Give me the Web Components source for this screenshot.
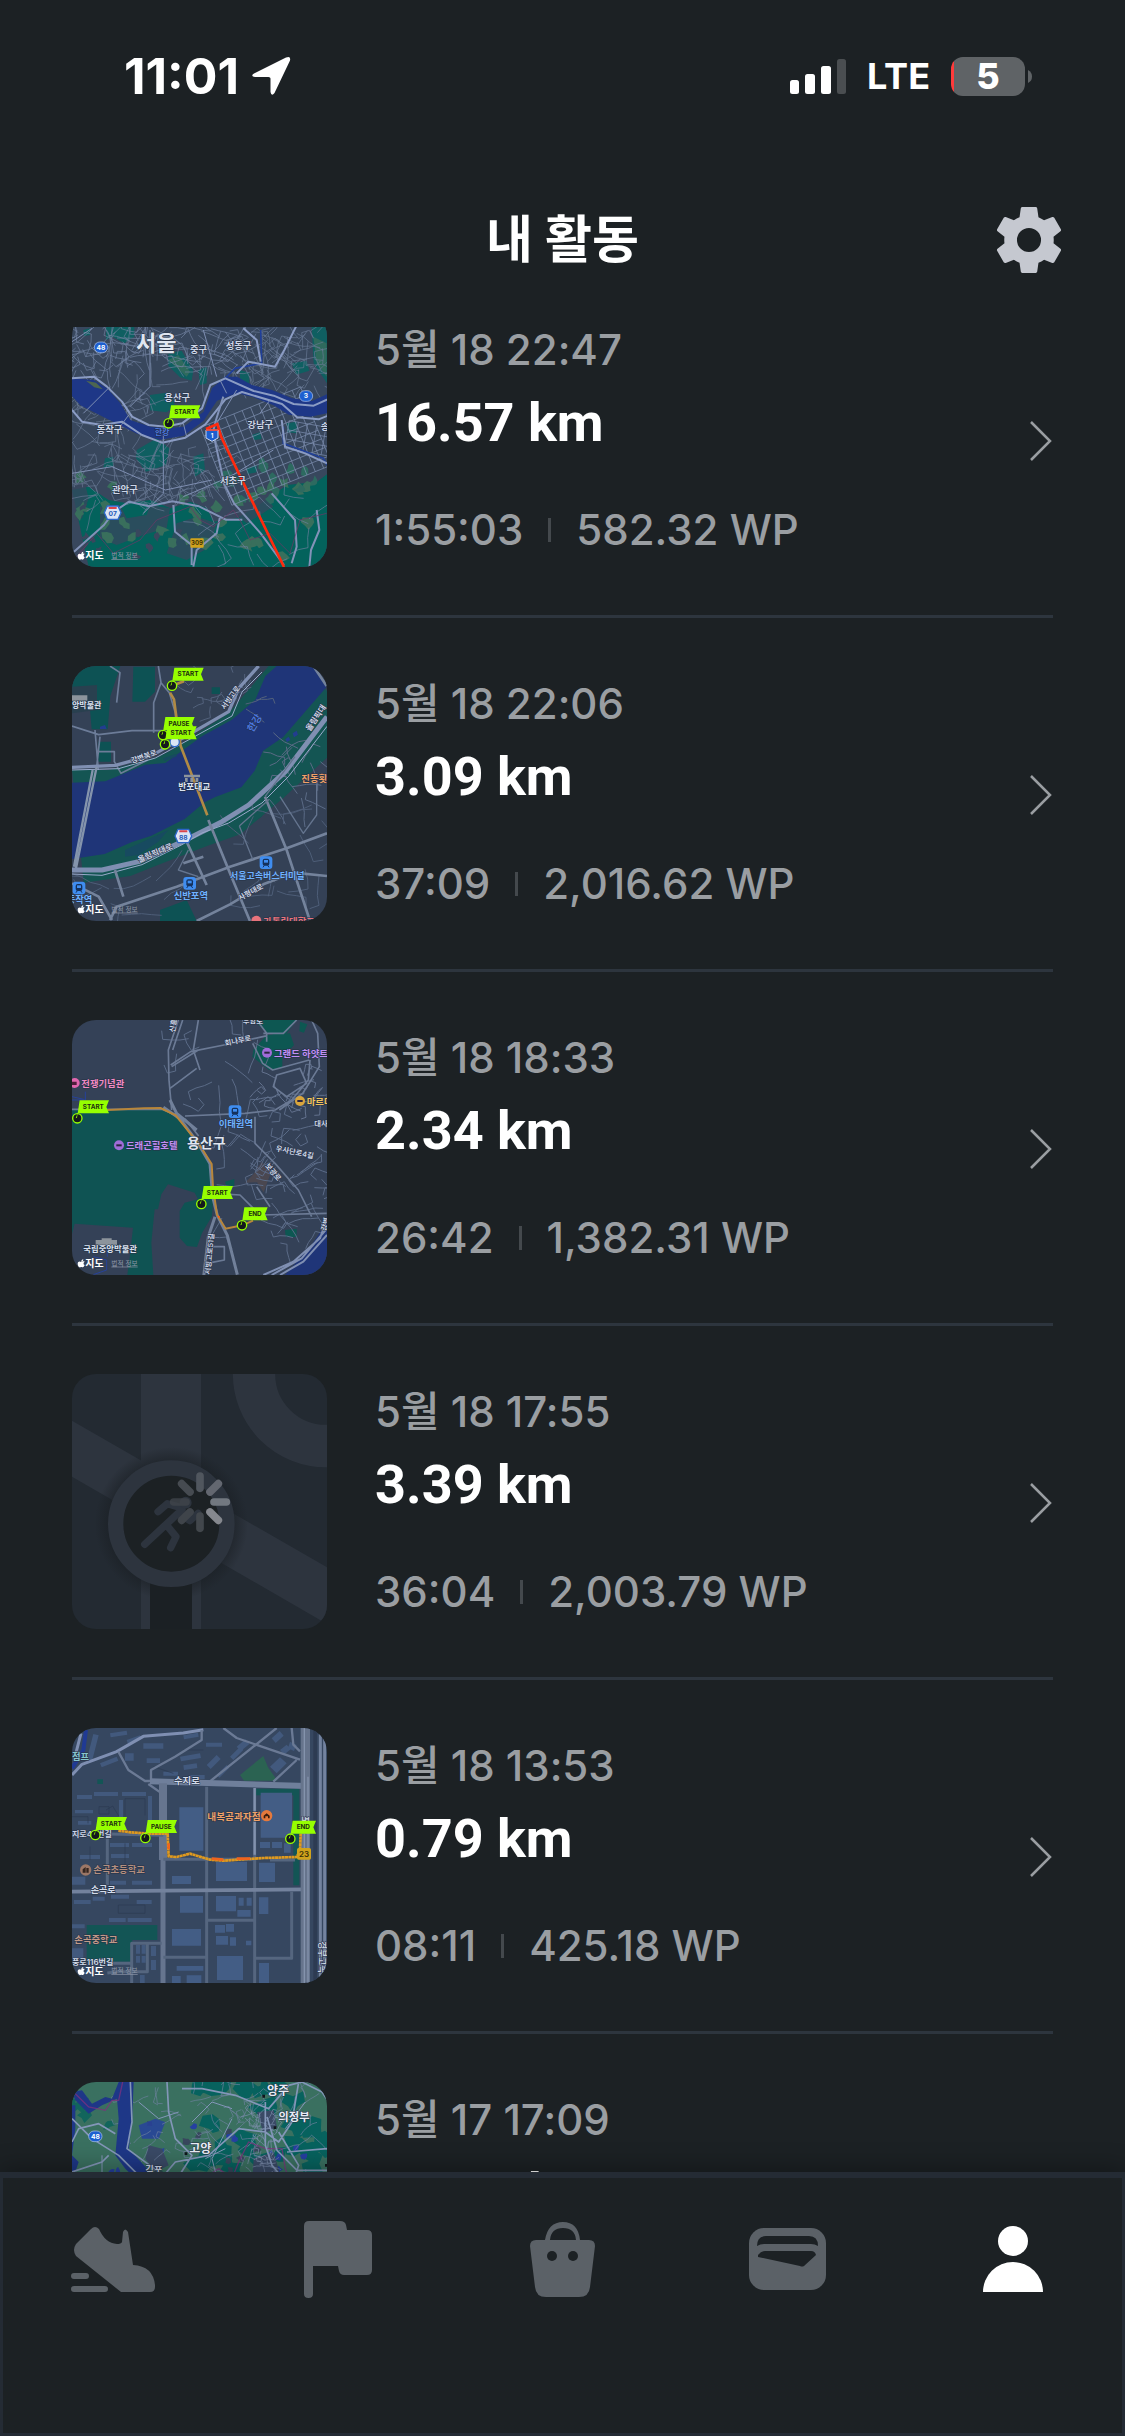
<!DOCTYPE html>
<html lang="ko">
<head>
<meta charset="utf-8">
<meta name="viewport" content="width=device-width, initial-scale=1">
<title>내 활동</title>
<style>
  :root {
    --bg: #1c2124;
    --line: #2d353e;
    --edge: #242b34;
    --muted: #9a9ea2;
    --icon: #5b6167;
  }
  html, body { height: 100%; margin: 0; }
  body {
    background: var(--bg);
    color: #fff;
    font-family: Inter, "Noto Sans CJK KR", sans-serif;
  }
</style>
</head>
<body>
<app-screen>
  <status-bar slot="top" time="11:01" network="LTE" battery="5"></status-bar>
  <title-bar slot="top">내 활동</title-bar>

  <activity-row map="gangnam">
    <span slot="date">5월 18 22:47</span>
    <span slot="distance">16.57 km</span>
    <span slot="duration">1:55:03</span>
    <span slot="points">582.32 WP</span>
  </activity-row>
  <activity-row map="banpo">
    <span slot="date">5월 18 22:06</span>
    <span slot="distance">3.09 km</span>
    <span slot="duration">37:09</span>
    <span slot="points">2,016.62 WP</span>
  </activity-row>
  <activity-row map="itaewon">
    <span slot="date">5월 18 18:33</span>
    <span slot="distance">2.34 km</span>
    <span slot="duration">26:42</span>
    <span slot="points">1,382.31 WP</span>
  </activity-row>
  <activity-row map="loading">
    <span slot="date">5월 18 17:55</span>
    <span slot="distance">3.39 km</span>
    <span slot="duration">36:04</span>
    <span slot="points">2,003.79 WP</span>
  </activity-row>
  <activity-row map="suji">
    <span slot="date">5월 18 13:53</span>
    <span slot="distance">0.79 km</span>
    <span slot="duration">08:11</span>
    <span slot="points">425.18 WP</span>
  </activity-row>
  <activity-row map="goyang">
    <span slot="date">5월 17 17:09</span>
    <span slot="distance">12.05 km</span>
  </activity-row>

  <tab-bar slot="bottom"></tab-bar>
</app-screen>

<script>
// ---- map drawing helpers (units are a third of a pixel) ----

const label = (x, y, size, text, fill = "#ccd5e6", extra = "") =>
  `<text x="${x}" y="${y}" font-size="${size}" font-weight="600" fill="${fill}" stroke="#263145" stroke-width="3" paint-order="stroke" ${extra}>${text}</text>`;

const flag = (x, y, text) => {
  const w = text === "END" ? 70 : 88;
  return `
    <circle cx="${x}" cy="${y}" r="14" fill="#15191c" stroke="#96ff00" stroke-width="4"/>
    <path d="M${x - 1} ${y - 2}L${x + 7} ${y - 54}h${w}l-8 20l8 19h-${w + 6}l-6 15z" fill="#96ff00"/>
    <text x="${x + 4 + w / 2}" y="${y - 28}" font-size="19" font-weight="700" fill="#1c2d10" text-anchor="middle">${text}</text>`;
};

const credit = (x, y) => `
  <path d="M${x + 10} ${y - 14}c-3-3-10-2-10 5c0 7 4 11 7 11c2 0 2-1 4-1s2 1 4 1c3 0 5-4 6-7c-5-2-4-8 0-10c-3-3-7-1-9 0zM${x + 11} ${y - 15}c0-4 2-7 6-7c0 4-3 7-6 7z" fill="#fff"/>
  <text x="${x + 23}" y="${y + 1}" font-size="30" font-weight="700" fill="#fff">지도</text>
  <text x="${x + 101}" y="${y - 3}" font-size="20" fill="#8d97a8" text-decoration="underline">법적 정보</text>`;

const shield = (x, y, text) => `
  <rect x="${x - 20}" y="${y - 16}" width="40" height="32" rx="16" fill="#1d5fd0" stroke="#b5c8ee" stroke-width="2"/>
  <text x="${x}" y="${y + 7}" font-size="20" font-weight="700" fill="#fff" text-anchor="middle">${text}</text>`;

const hexShield = (x, y, text) => `
  <path d="M${x - 25} ${y}l9-20h32l9 20l-9 20h-32z" fill="#dbe4f5" stroke="#2b66c9" stroke-width="4"/>
  <path d="M${x - 12} ${y - 14}h24" stroke="#d8454c" stroke-width="6"/>
  <text x="${x}" y="${y + 11}" font-size="20" font-weight="700" fill="#2459b8" text-anchor="middle">${text}</text>`;

const poi = (x, y, color) => `
  <circle cx="${x}" cy="${y}" r="15" fill="${color}"/>
  <rect x="${x - 8}" y="${y - 3}" width="16" height="6" fill="#2a2540"/>`;

const station = (x, y) => `
  <rect x="${x - 19}" y="${y - 19}" width="38" height="38" rx="9" fill="#3f8df0"/>
  <rect x="${x - 10}" y="${y - 12}" width="20" height="21" rx="6" fill="#14315c"/>
  <rect x="${x - 6}" y="${y - 8}" width="12" height="8" fill="#3f8df0"/>
  <path d="M${x - 9} ${y + 14}l4-6M${x + 9} ${y + 14}l-4-6" stroke="#14315c" stroke-width="3"/>`;

const roads = (d, width, color = "#7f8fb2") =>
  `<path d="${d}" fill="none" stroke="${color}" stroke-width="${width}" stroke-linejoin="round"/>`;

// small streets: short wandering lines, the same for the same seed
function streets(seed, count, [x, y, w, h], len = 24) {
  let s = seed;
  const rnd = () => (s = (s * 16807) % 2147483647) / 2147483647;
  let d = "";
  for (let i = 0; i < count; i++) {
    d += `M${(x + rnd() * w).toFixed(0)} ${(y + rnd() * h).toFixed(0)}`;
    let a = rnd() * 6.28;
    for (let j = 0; j < 4; j++) {
      a += rnd() < 0.3 ? 1.4 : rnd() * 0.6 - 0.3;
      d += `l${(Math.cos(a) * len).toFixed(0)} ${(Math.sin(a) * len).toFixed(0)}`;
    }
  }
  return d;
}

function blobs(seed, count, [x, y, w, h], r, fill) {
  let s = seed;
  const rnd = () => (s = (s * 16807) % 2147483647) / 2147483647;
  let out = "";
  for (let i = 0; i < count; i++) {
    const cx = x + rnd() * w, cy = y + rnd() * h;
    let pts = "";
    for (let a = 0; a < 8; a++) {
      const q = r * (0.4 + rnd());
      pts += `${(cx + Math.cos(a * 0.785) * q).toFixed(0)},${(cy + Math.sin(a * 0.785) * q).toFixed(0)} `;
    }
    out += `<polygon points="${pts}" fill="${fill}"/>`;
  }
  return out;
}

function grid(x, y, cols, rows, dx, dy) {
  let d = "";
  for (let i = 0; i <= cols; i++) d += `M${x + i * dx} ${y}v${rows * dy}`;
  for (let j = 0; j <= rows; j++) d += `M${x} ${y + j * dy}h${cols * dx}`;
  return d;
}

const rect = (x, y, w, h) => `M${x} ${y}h${w}v${h}h${-w}z`;

// ---- the maps ----

const maps = {
  gangnam: {
    box: "66 6 765 765",
    art: `
      <path d="M66 6h765v765h-765z" fill="#38475d"/>
      <path d="M168 40h85v40l-30 20l-35-20l-20 10zM355 130l40-8l35 60l-5 30l-35-10l-35-35zM100 60l20-5v20l-18 3zM300 255l60-8l15 40l-25 20l-50-6zM725 160l45-8l8 30l-40 12zM570 180l28 8v35l-28-5zM260 420l60-35l38 30l-10 50l-60 20l-30-40zM165 445l25-5v30l-30 5zM430 440l30-10l5 50l-30 20zM785 50h46v170l-40-60zM445 180l25-10v50l-20 5zM710 340l30-5v35l-28-3zM605 375l25-8l5 20l-22 3zM590 475l30-10v22l-28 5z" fill="#0f5f61"/>
      <path d="M355 150l30-15l35 50l-10 15zM790 80l40 20v100l-30-40z" fill="#2f6a5d"/>
      <path d="M66 540l50-10l60 40l55 10l70-10l60 25l60-20l50 20l20 40l70-10l80-50l70-50l90-10l60-45h31v351h-765z" fill="#03625c"/>
      <path d="M66 530l40-5l10 40l-20 60l-30 10zM150 590l60-5l20 40l60-10l10-30l60 10l-10 60l-70 20l-80 30l-50-20zM520 540l60-20l60 30l30 40l-80 50l-50-40zM380 640l60-20l60 20l-20 70l-70 40l-60-20z" fill="#38475d" opacity=".75"/>
      ${blobs(11, 34, [90, 500, 720, 250], 17, "#396f5c")}
      ${blobs(5, 14, [500, 420, 320, 160], 15, "#2d6a60")}
      ${blobs(77, 10, [100, 570, 300, 170], 11, "#38475d")}
      <g>
        ${roads(streets(7, 130, [60, 40, 560, 150]), 2, "#7182a0")}
        ${roads(streets(23, 95, [60, 380, 440, 190]), 2, "#6a7a96")}
        ${roads(streets(31, 60, [600, 60, 230, 190]), 2, "#6a7a96")}
        ${roads(streets(61, 40, [60, 220, 280, 130]), 2, "#6a7a96")}
        ${roads(streets(41, 16, [400, 560, 420, 190], 30), 2, "#7081a0")}
        <g transform="rotate(-22 600 400)">${roads(grid(480, 300, 12, 9, 27, 28), 2, "#7c8dae")}</g>
        <g transform="rotate(10 760 380)">${roads(grid(710, 340, 5, 3, 28, 28), 2, "#7c8dae")}</g>
      </g>
      <path d="M66 205l65 5l40 25l40 45l30 50l60 20l50 5l50-5l60-45l25-70l40-35h35l45 25l60 15l60 25l60 8l45-20l40-55v85l-30 25l-60 12l-65-6l-45-28l-60-24l-50-12l-60 22l-40 60l-60 45l-70 12l-70-18l-60-30l-60-30l-50-25l-45-50l-50-12z" fill="#1e3787"/>
      <path d="M108 212l30 6l20 20l-25-6z" fill="#4d6650"/>
      <path d="M632 60l3 100l-80 15l-30 30M700 350v50l120 45l11 20" fill="none" stroke="#1f3f9a" stroke-width="5"/>
      ${roads("M66 205l65-5l40 30l45 45l30 45l50 25l50 5l50-10l60-45l25-70l45-20l85 38l60 14l60 25l60 5l55-25l30-40M66 300l30 35l60 10l60-10l60 40l60 23l70-15l60-40l60-75l50-22l120 36l45 40l65 6l75-30M560 190l35-35l80 15l28-50l35-70M580 55l40 35l12 65M695 330l10 80l60 20l66 30", 6, "#8b9cc4")}
      ${roads("M72 725l90-80l30-40l45-30l60 14l70-15l80 15l80 40h50M492 380l30 140l30 60l80 90l70 95M520 260l-22 70l-10 40M665 550l70 80l5 80l-15 50M800 600l8 60l-25 60l-5 51M370 585l5 80l50 40v60M430 770l10-50l60-50l10-50", 6, "#8292b8")}
      ${roads("M300 60v170l-60 60M460 60l40 140M340 350v200l-60 60M66 95l60-40M66 490l120-20l160 70l140-30M400 560l140-60l130-80M560 240l-60 100M660 270l-30 40M180 230l-80 80M510 210l20 40M240 310l-30 40M400 340l10 40", 3)}
      <path d="M80 740l60-70l50 60l80-40l50-60l100-40l30 40l40 20l60-50l20 30l30 60l60-20l60 60l30-100l80-20" fill="none" stroke="#6f3767" stroke-width="3" opacity=".7"/>
      <path d="M468 357l34-15l12 40l188 389" fill="none" stroke="#ff2a0d" stroke-width="8"/>
      <path d="M468 360h36v24l-18 10l-18-10z" fill="#1d5fd0" stroke="#c8d6f3" stroke-width="3"/>
      <path d="M468 360h36" stroke="#ff3a20" stroke-width="5"/>
      <text x="486" y="385" font-size="18" font-weight="700" fill="#fff" text-anchor="middle">1</text>
      ${shield(153, 112, "48")}${shield(768, 258, "3")}
      ${hexShield(188, 608, "07")}
      <rect x="421" y="685" width="40" height="28" rx="3" fill="#d0a21c"/>
      <text x="441" y="706" font-size="18" font-weight="700" fill="#3b3008" text-anchor="middle">309</text>
      ${label(258, 122, 66, "서울", "#dfe5f0")}
      ${label(420, 130, 28, "중구")}${label(527, 118, 28, "성동구")}
      ${label(343, 272, 28, "용산구")}${label(140, 368, 28, "동작구")}
      ${label(592, 354, 28, "강남구")}${label(510, 522, 28, "서초구")}
      ${label(186, 550, 28, "관악구")}${label(812, 360, 28, "송")}
      ${label(314, 375, 24, "한강", "#4a76e0")}
      ${flag(356, 340, "START")}
      ${credit(83, 747)}`
  },

  banpo: {
    box: "66 48 765 765",
    art: `
      <path d="M66 48h765v765h-765z" fill="#344156"/>
      <path d="M66 48h145l-30 90l-8 100h-48l-5-60l-54-50zM250 50h65v75l-30 30h-38zM145 275h38v60h-38zM485 112h25v20h-25zM330 780l80-30l30 63h-110zM600 490l30-15l5 25l-25 15z" fill="#0d5254"/>
      <path d="M66 110l75-5v75l-75 10z" fill="#29404f"/>
      <path d="M66 360h110l150-40l40-20l60-40l110-70l120-142h110l65 75v200l-130 120l-130 110l-100 35l-130 50l-100 40l-140 20z" fill="#145553"/>
      <path d="M66 398l100-4l120-50l60-5l110-80l90-50l70-60l30-70l35-32h110l38 65l-130 150l-60 40l-25 60l-40 50l-80 30l-30 15l-60 50l-100 50l-60 20l-80 35l-98 15z" fill="#1f3578"/>
      <path d="M225 600l130-60l-30 35l-60 40l-40 5zM340 325l40-14v8l-36 14z" fill="#174a60"/>
      <path d="M706 268l10-8l5 10l-10 6zM728 250l12-8l4 12l-12 8zM150 230l15-5l5 12h-20z" fill="#223d90"/>
      ${roads(streets(19, 16, [430, 48, 190, 130], 17), 3, "#53627c")}
      ${roads(streets(9, 16, [640, 260, 190, 250], 22), 3, "#5b6b86")}
      ${roads(streets(29, 14, [580, 480, 250, 300], 30), 3, "#4e5e78")}
      ${roads(streets(39, 8, [100, 660, 300, 140], 30), 3, "#4e5e78")}
      ${roads("M325 48l8 50l-22 60v90M333 98l25 30l18 60l4 60M66 228l80 26l100-12h90M135 240l10 120M150 260l-10 90M145 305h48v30l20 35l80-40M180 48l30 20l-10 90", 5, "#6c7c98")}
      ${roads("M66 352l130-6l110-30l100-56l130-75l30-70l60-67", 10)}
      ${roads("M66 360l140-4l110-32l110-60l120-66l30-72l60-60", 3, "#9aaacb")}
      ${roads("M140 350l-62 305M128 360l-56 290", 7, "#8494ac")}
      ${roads("M66 660h90l110-25l130-60l120-60l80-50l110-100l125-165", 15)}
      ${roads("M66 672l90 4l120-32l120-60l60-35l80-30l100-60l80-80l115-150", 3, "#9aaacb")}
      ${roads("M180 810l20-40l180-60l160-60l170-55l121-45M440 813l100-50l100-60l90-35l101 10M475 510l65 160l60 143M645 440l65 160l70 213M410 575l60 130M195 660l25 80M400 640l60-20M66 700l80 40l40 70M790 48l40 60", 8, "#74839c")}
      ${roads("M568 528l40 100M568 528l90-80M645 440l90-120M800 400v95l-40 55l-70-110M415 600l-30 60l60 20", 4, "#64748e")}
      <path d="M370 106l32-12M360 128l12 20l8 60l12 80l80 208" fill="none" stroke="#b08a45" stroke-width="8"/>
      <path d="M66 136h46v16h-46zM402 374h48v8h-48zM405 384h8v12h-8zM421 384h8v12h-8zM437 384h8v12h-8z" fill="#8c949c"/>
      ${label(66, 173, 24, "앙박물관", "#dce4f2")}
      ${label(385, 420, 26, "반포대교", "#dce4f2")}
      ${label(0, 0, 22, "강변북로", "#ccd5e6", 'transform="translate(246 340) rotate(-19)"')}
      ${label(0, 0, 22, "서빙고로", "#ccd5e6", 'transform="translate(524 180) rotate(-54)"')}
      ${label(0, 0, 30, "한강", "#4a76e0", 'transform="translate(608 248) rotate(-58)"')}
      ${label(0, 0, 24, "올림픽대로", "#ccd5e6", 'transform="translate(268 638) rotate(-23)"')}
      ${label(0, 0, 24, "올림픽대", "#ccd5e6", 'transform="translate(780 245) rotate(-56)"')}
      ${label(0, 0, 22, "사평대로", "#ccd5e6", 'transform="translate(570 752) rotate(-28)"')}
      ${label(754, 397, 28, "진동횟", "#f0a268")}
      ${label(540, 686, 27, "서울고속버스터미널", "#6fb1ff")}
      ${label(371, 747, 28, "신반포역", "#6fb1ff")}
      ${label(50, 760, 28, "동작역", "#6fb1ff")}
      <circle cx="619" cy="812" r="15" fill="#e8737c"/>
      ${label(640, 824, 28, "가톨릭대학교", "#e8737c")}
      ${station(648, 638)}${station(419, 700)}${station(87, 714)}
      <circle cx="374" cy="276" r="14" fill="#dbe4f5" stroke="#2b66c9" stroke-width="4"/>
      ${hexShield(400, 558, "88")}
      ${flag(339, 255, "PAUSE")}
      ${flag(345, 283, "START")}
      ${flag(366, 107, "START")}
      ${credit(83, 788)}`
  },

  itaewon: {
    box: "66 60 765 765",
    art: `
      <path d="M66 60h765v765h-765z" fill="#344157"/>
      <path d="M66 330l270-6l60 35l60 90l30 50l4 90l-4 60l-30 50l-15 42l-30-3l-22-25v-80l15-25l40-10l-10-20l-80-25l-20 30l-10 45h-10l-10 100l6 97h-78l7-52l10-90l-175-12l-8 30z" fill="#0f5353"/>
      <path d="M610 60h130l-30 40l-30 6l-30-8zM610 150l40-45l70-5l12 35l-35 40v30l-40 5l-50-40zM750 65l22 8l-10 25l-14-4zM705 690l35-4v25h-33zM525 545l28-8v22l-25-3z" fill="#0d5752"/>
      <path d="M585 548l25-25l25-38l28 32l-22 60l-20-30z" fill="#4a4750"/>
      <path d="M705 825l80-90l46-70v160z" fill="#1f3578"/>
      <path d="M66 290l35 8M66 300h40v-25M130 770l40 10v30l-40 14M150 735l20-10l2 45" fill="none" stroke="#27429a" stroke-width="3"/>
      ${roads(streets(13, 24, [600, 200, 230, 130], 16), 3, "#62718d")}
      ${roads(streets(43, 36, [640, 340, 190, 330], 24), 3, "#5b6b87")}
      ${roads(streets(3, 12, [380, 70, 240, 230], 26), 3, "#5b6b87")}
      ${roads(streets(53, 10, [500, 360, 160, 200], 24), 3, "#5b6b87")}
      ${roads(streets(17, 6, [480, 700, 300, 100], 20), 3, "#5b6b87")}
      ${roads("M385 60l-30 90l2 90l8 90M398 60l-30 90M362 195l60-40l100-20l130-28M445 60l-15 90l20 60M620 60l30 40h50l40-40M650 100v25M608 130l30 60l30 20l110-30M780 180l-5 60l-50 60l-50 30l-90 10l-180 8M670 100h-30M440 205l-80 60M445 150l-80 50M680 225l70-20l20 45l-60 40l-40-30z", 5, "#6b7a95")}
      ${roads("M785 60l18 40l5 100l-50 80l-70 50M66 328h270l70 30l40 50M615 350v80l60 60l70 80l40 80M490 580l80 5l60 60l200-5M620 560l40 60M485 740h38v40l-40 8", 5, "#6b7a95")}
      ${roads("M340 322l50 34l55 75l35 60l8 100l14 55l30 60l30 118M360 300l20 40l60 50M495 650l-20 60l-14 120", 9, "#71809a")}
      ${roads("M640 825l90-40l80-70l21-60M665 825l90-50l76-90M690 825l70-40l71-80", 6)}
      <path d="M172 330l110-5l50-1l45 22l70 86l38 60l4 70l12 82l26 42l50-10l32-14" fill="none" stroke="#b8863a" stroke-width="6"/>
      <circle cx="506" cy="650" r="3" fill="#ff5a1a"/>
      <path d="M137 720h64v16h-64zM155 715h30v6h-30z" fill="#8c949c"/>
      ${label(100, 757, 25, "국립중앙박물관", "#dce4f2")}
      ${label(94, 260, 28, "전쟁기념관", "#f28bc4")}
      ${label(228, 446, 28, "드래곤힐호텔", "#c08ff5")}
      ${label(672, 170, 28, "그랜드 하얏트", "#c08ff5")}
      ${label(770, 314, 28, "마르디", "#f2c35c")}
      ${label(506, 382, 28, "이태원역", "#6fb1ff")}
      ${label(411, 444, 42, "용산구", "#dfe5f0")}
      ${label(0, 0, 22, "회나무로", "#ccd5e6", 'transform="translate(526 138) rotate(-12)"')}
      ${label(0, 0, 22, "신흥", "#ccd5e6", 'transform="translate(374 98) rotate(-80)"')}
      ${label(578, 68, 22, "후암로")}
      ${label(0, 0, 22, "우사단로4길", "#ccd5e6", 'transform="translate(676 452) rotate(12)"')}
      ${label(0, 0, 22, "보광로", "#ccd5e6", 'transform="translate(644 498) rotate(50)"')}
      ${label(0, 0, 22, "서빙고로51길", "#ccd5e6", 'transform="translate(480 824) rotate(-84)"')}
      ${label(793, 378, 22, "대사")}
      ${label(0, 0, 22, "강변", "#ccd5e6", 'transform="translate(828 694) rotate(-76)"')}
      <circle cx="74" cy="249" r="15" fill="#e066ae"/>
      <path d="M66 245h14v10h-14z" fill="#4f1d3b"/>
      ${poi(207, 436, "#a06cd8")}${poi(651, 158, "#a06cd8")}${poi(750, 303, "#d9a53c")}
      ${station(555, 335)}
      ${flag(82, 355, "START")}
      ${flag(454, 612, "START")}
      ${flag(576, 676, "END")}
      ${credit(83, 800)}`
  },

  loading: {
    box: "66 42 765 765",
    art: `
      <defs>
        <radialGradient id="halo">
          <stop offset=".78" stop-color="#1a1f24"/>
          <stop offset="1" stop-color="#1a1f24" stop-opacity="0"/>
        </radialGradient>
      </defs>
      <path d="M66 42h765v765h-765z" fill="#232a32"/>
      <path d="M273 42h180v765h-180zM66 182l765 440v170l-765-442z" fill="#2d343e"/>
      <circle cx="828" cy="42" r="216" fill="none" stroke="#2d343e" stroke-width="127"/>
      <circle cx="364" cy="491" r="230" fill="url(#halo)" opacity=".7"/>
      <path d="M300 640h126v167h-126z" fill="#1b2024"/>
      <circle cx="364" cy="491" r="167" fill="#1c2124" stroke="#2d343e" stroke-width="46"/>
      <g fill="none" stroke="#2d343e" stroke-width="22" stroke-linecap="round" stroke-linejoin="round">
        <path d="M284 553l112-104M324 455l28-24l34 10M352 498l26 32l-16 33M388 462l32 20l24-22"/>
      </g>
      <circle cx="407" cy="428" r="18" fill="#2d343e"/>
      <g stroke-width="23" stroke-linecap="round">
        <path d="M450 385v-37" stroke="#50565e"/>
        <path d="M480 396l25-25" stroke="#636770"/>
        <path d="M492 426h37" stroke="#727880"/>
        <path d="M480 456l25 25" stroke="#85888e"/>
        <path d="M450 468v37" stroke="#42474c"/>
        <path d="M420 456l-25 25" stroke="#3f444a"/>
        <path d="M408 426h-37" stroke="#40454b" opacity=".8"/>
        <path d="M420 396l-25-25" stroke="#464b51"/>
      </g>`
  },

  suji: {
    box: "66 54 765 765",
    art: `
      <path d="M66 54h765v765h-765z" fill="#364760"/>
      <path d="M108 60l-8 60l-34 55" fill="none" stroke="#203a94" stroke-width="12"/>
      <path d="M110 645h212v45h-75v65h-137zM616 236h132v290h-18v-270h-114zM142 208h17v14h-17z" fill="#135555"/>
      <path d="M570 195l70-57l14 34l28 40h-100z" fill="#2b6352"/>
      <path d="${rect(388, 292, 72, 130)}${rect(632, 248, 94, 135)}${rect(498, 455, 93, 58)}${rect(627, 458, 48, 58)}${rect(366, 498, 57, 24)}${rect(390, 558, 69, 50)}${rect(498, 558, 60, 46)}${rect(366, 657, 87, 50)}${rect(495, 645, 30, 23)}${rect(528, 642, 24, 23)}${rect(501, 738, 78, 72)}${rect(627, 759, 30, 60)}${rect(498, 678, 36, 26)}${rect(540, 682, 18, 25)}${rect(627, 562, 28, 50)}${rect(566, 563, 15, 24)}${rect(590, 563, 15, 24)}${rect(630, 396, 30, 18)}${rect(666, 396, 30, 18)}${rect(702, 400, 20, 28)}${rect(380, 768, 80, 14)}${rect(366, 798, 26, 21)}${rect(410, 796, 44, 23)}${rect(588, 692, 16, 14)}${rect(562, 600, 40, 20)}" fill="#435d85"/>
      <path d="${rect(132, 246, 72, 12)}${rect(216, 246, 72, 12)}${rect(81, 255, 45, 12)}${rect(207, 270, 12, 66)}${rect(294, 258, 12, 75)}${rect(75, 300, 54, 10)}${rect(84, 333, 40, 11)}${rect(180, 399, 57, 12)}${rect(246, 399, 60, 12)}${rect(90, 435, 60, 12)}${rect(183, 432, 54, 12)}${rect(246, 512, 60, 12)}${rect(180, 512, 48, 12)}${rect(66, 500, 40, 24)}${rect(72, 570, 50, 12)}${rect(128, 560, 36, 12)}${rect(183, 554, 54, 12)}${rect(260, 570, 45, 12)}${rect(177, 624, 50, 12)}${rect(233, 624, 72, 12)}${rect(66, 643, 38, 12)}${rect(258, 705, 12, 26)}${rect(275, 705, 12, 26)}${rect(258, 738, 12, 20)}${rect(275, 738, 12, 20)}${rect(303, 708, 15, 30)}${rect(303, 750, 15, 30)}${rect(270, 795, 14, 24)}${rect(66, 715, 34, 30)}" fill="#42597d"/>
      <g fill="#42597d">
        <path d="M130 72l16 4l-20 78l-16-4zM150 160l50-20l5 12l-50 20zM225 130h26v22h-26zM280 100h60v16h-60zM290 145h40v14h-40zM390 140l60-10l3 14l-60 10zM468 98h48v12h-48zM400 166l40-6l2 14l-40 6zM340 185h44v12h-44zM470 165l30-30l12 12l-30 30zM560 110l26-22l12 14l-26 22zM665 85l24-22l12 14l-24 22zM660 170l30-28l20 18l-30 30zM690 120l20-16l12 14l-20 16zM720 95l20 10l-8 18l-18-8zM540 140l30-30l10 10l-30 30zM500 195l30-30l8 8l-30 30zM400 76l44-8l2 12l-44 8zM180 70l50-8l2 12l-50 8zM230 90l40-14l4 12l-40 14zM420 195h44v12h-44z"/>
      </g>
      ${roads("M168 300l20-12l18 30M225 320v-54h60v50M205 610v-25h80v25zM147 312h30v-22h-30zM66 320h48v20M400 120h60M310 170l60 20M225 400v90M120 410v40", 2, "#2c3b52")}
      ${roads("M66 195l30-32l104-38l80-46l120-10l60-10M75 140l18-70", 9)}
      ${roads("M205 125l30 55l50 33h55M455 60v30l-80 50l-72 40v30M520 54l40 30l190 65M680 54l-200 160M740 150l-70 65M725 54l5 50l20 20M295 222l40 28", 7, "#6b7a95")}
      ${roads("M300 214l470 14", 18, "#6f7f9b")}
      ${roads("M339 220v230", 24, "#66758f")}
      ${roads("M339 440v379", 15, "#66758f")}
      ${roads("M470 230v589M614 234v585M340 448h270M172 375v150M340 742h130M470 631h145M725 545v200h-110M660 450h75M180 372l160 4M245 760v-60h90M292 700v85h-90l-30 4M66 372h60M185 760h60v59", 9, "#55667f")}
      ${roads("M614 234v200", 7, "#8292ae")}
      ${roads("M66 545l280-3l420-4", 11, "#73829d")}
      ${roads("M766 54v765", 28, "#66748c")}
      ${roads("M763 54v765M774 200v619", 4, "#8493ac")}
      <path d="M790 54h11v765h-11z" fill="#2d3b52"/>
      ${roads("M811 54v765M824 54v765", 9, "#73839f")}
      <path d="M205 362l38 5l60 4h50l3 68l24 2l40-10l60 18l40 3l60-4l60-4l100-3l10-20l2-50" fill="none" stroke="#e09a1e" stroke-width="8" stroke-dasharray="9 1"/>
      <path d="M356 400v18M485 446l35 3M560 446h40" fill="none" stroke="#f0641c" stroke-width="8"/>
      ${label(66, 149, 28, "점프", "#86c5cf")}
      ${label(372, 222, 28, "수지로", "#d3dcea")}
      ${label(0, 0, 28, "포은", "#ccd5e6", 'transform="translate(756 318) rotate(90)"')}
      ${label(66, 380, 24, "지로42번길")}
      ${label(472, 329, 29, "내복곰과자점", "#f0a268")}
      ${label(130, 490, 28, "손곡초등학교", "#b38f80")}
      ${label(122, 550, 27, "손곡로", "#d3dcea")}
      ${label(73, 700, 28, "손곡중학교", "#c09a88")}
      ${label(66, 764, 24, "풍로116번길", "#d3dcea")}
      ${label(0, 0, 26, "경부고속", "#ccd5e6", 'transform="translate(806 694) rotate(90)"')}
      <rect x="741" y="414" width="42" height="35" rx="5" fill="#d0a21c"/>
      <text x="762" y="440" font-size="24" font-weight="600" fill="#3b3008" text-anchor="middle">23</text>
      <circle cx="650" cy="317" r="17" fill="#e5793c"/>
      <path d="M641 325v-8l9-7l9 7v8h-5v-6h-8v6z" fill="#3a1c0c"/>
      <circle cx="107" cy="480" r="17" fill="#9c7766"/>
      <path d="M98 488v-10l9-7v17zM109 474h7v14h-7z" fill="#33251f"/>
      ${flag(136, 375, "START")}
      ${flag(286, 384, "PAUSE")}
      ${flag(721, 386, "END")}
      ${credit(83, 793)}`
  },

  goyang: {
    box: "0 0 765 765",
    art: `
      <path d="M0 0h765v765h-765z" fill="#3a7060"/>
      ${blobs(21, 26, [380, 0, 380, 320], 34, "#07625e")}
      ${blobs(8, 5, [0, 60, 110, 80], 20, "#12655c")}
      ${blobs(15, 12, [200, 120, 540, 190], 11, "#38475d")}
      ${blobs(36, 16, [120, 130, 620, 190], 10, "#2540a0")}
      <path d="M555 90l50-5l10 50l-40 20zM545 230l60-20l20 70l-20 100h-70zM230 190l40 10l20 50l-40 20l-30-40z" fill="#3a4a66"/>
      <path d="M200 130l50-20l30 10l-20 50h-50z" fill="#2540a0" opacity=".8"/>
      ${roads(streets(47, 90, [140, 0, 620, 320], 16), 2, "#6f82a0")}
      ${roads(streets(57, 40, [540, 90, 80, 220], 12), 2, "#7e8fae")}
      <path d="M0 30l30-5l30 40l40-20l20 5l20-50h45l-5 120l-10 80l130 140h-60l-80-80l-30-40l10-110l-5-60l-45 20l-40 25l-40-40zM0 70h10v70l-10 80l20 20l-10 30l25 50h-35z" fill="#1e3787"/>
      <path d="M10 35l40 40l50 10l20-30h20l12-55M410 280l30-20l40 30l20-50l30-60l50 20h50l10 60l20 60" fill="none" stroke="#80307f" stroke-width="4" opacity=".75"/>
      ${roads("M175 0l5 120l-15 80l150 110M285 0l5 90l20 80l50 50l-50 80M330 20h60l100 20l100 40l60-70l40-10l60 30l20 30M680 0l-20 120l-40 60l-40-30l-80-10l-90 80l-100 20l-60 70M0 110l60 60l80 50l60 60M0 180l20-40l60-15l50 30M580 60v130l20 60l50 60M0 270l90-30l20-20M765 265h-90l-60-60l-30-100M620 150l60 100l-20 60M765 200l-120 10", 5, "#8396b8")}
      ${roads("M360 120l60-60l60 20M400 230l60-30M440 310l-20-80l60-120M700 60l-60 80M200 60l60 50l60-20M90 220v90", 3, "#8396b8")}
      ${shield(70, 163, "48")}
      <path d="M571 38h8v9h-8zM605 133h8v8h-8zM338 211h8v8h-8zM759 246h6v8h-6z" fill="#10151a"/>
      ${label(585, 40, 36, "양주", "#e8edf5")}
      ${label(619, 118, 34, "의정부", "#e8edf5")}
      ${label(352, 212, 36, "고양", "#e8edf5")}
      ${label(220, 272, 28, "김포")}`
  }
};

class AppScreen extends HTMLElement {
  constructor() {
    super();
    this.attachShadow({ mode: "open" }).innerHTML = `
      <style>
        :host { display: flex; flex-direction: column; height: 100vh; }
        header, footer { flex: none; }
        footer { position: relative; box-shadow: 0 -3px 24px #0005; }
        main {
          flex: 1;
          min-height: 0;
          overflow-y: auto;
          scrollbar-width: none;
          padding: 0 72px;
        }
      </style>
      <header><slot name="top"></slot></header>
      <main><slot></slot></main>
      <footer><slot name="bottom"></slot></footer>
    `;
  }
  connectedCallback() {
    requestAnimationFrame(() => this.restore());
    window.addEventListener("load", () => this.restore());
  }
  restore() {
    this.shadowRoot.querySelector("main").scrollTop = 63;
  }
}

class StatusBar extends HTMLElement {
  connectedCallback() {
    const root = this.attachShadow({ mode: "open" });
    root.innerHTML = `
      <style>
        :host {
          display: flex;
          justify-content: space-between;
          align-items: center;
          height: 112px;
          padding: 20px 93px 0 124px;
          font-weight: 700;
        }
        div { display: flex; align-items: center; }
        .left { gap: 12px; font-size: 50px; }
        .right { gap: 21px; font-size: 36px; font-weight: 700; }
        .battery { gap: 3px; }
        .cell {
          justify-content: center;
          width: 74px;
          height: 39px;
          border-radius: 12px;
          background: linear-gradient(90deg, #ff3b3b 3px, #5f6366 3px);
          font-weight: 800;
        }
        svg { display: block; }
      </style>
      <div class="left">
        <span>${this.getAttribute("time")}</span>
        <svg width="40" height="40" viewBox="0 0 40 40" fill="#fff"><path d="M3 17.500L35 1.500q5-2 4 3L23.500 37q-3 4-4-1V22.500q0-1.500-2-1.500H4q-5-1-1-3.500z"/></svg>
      </div>
      <div class="right">
        <svg width="56" height="35" viewBox="0 0 56 35" fill="#fff">
          <rect y="21" width="9" height="14" rx="2.500"/>
          <rect x="15" y="15" width="10" height="20" rx="2.500"/>
          <rect x="31" y="7" width="10" height="28" rx="2.500"/>
          <rect x="47" width="9" height="35" rx="2.500" fill="#4a4e51"/>
        </svg>
        <span>${this.getAttribute("network")}</span>
        <div class="battery">
          <div class="cell">${this.getAttribute("battery")}</div>
          <svg width="4" height="13" viewBox="0 0 4 13" fill="#5f6366"><path d="M0 0q4 2 4 6.500t-4 6.500z"/></svg>
        </div>
      </div>
    `;
  }
}

class TitleBar extends HTMLElement {
  constructor() {
    super();
    this.attachShadow({ mode: "open" }).innerHTML = `
      <style>
        :host {
          display: grid;
          grid-template-columns: 1fr auto 1fr;
          align-items: center;
          height: 174px;
          padding: 21px 63px 0;
        }
        h1 {
          grid-column: 2;
          margin: 0;
          font-size: 51px;
          line-height: 78px;
          font-weight: 700;
        }
        button {
          justify-self: end;
          padding: 0;
          border: 0;
          background: none;
          color: #c5c8d0;
        }
        svg { display: block; }
      </style>
      <h1><slot></slot></h1>
      <button type="button" aria-label="설정">
        <svg width="66" height="66" viewBox="2 2 20 20" fill="currentColor"><path d="M19.430 12.980c.04-.32.07-.64.07-.98s-.03-.66-.07-.98l2.110-1.650c.19-.15.24-.42.12-.64l-2-3.460c-.12-.22-.39-.3-.61-.22l-2.490 1c-.52-.4-1.080-.73-1.690-.98l-.38-2.650C14.460 2.180 14.250 2 14 2h-4c-.25 0-.46.18-.49.42l-.38 2.650c-.61.25-1.170.59-1.690.98l-2.490-1c-.23-.09-.49 0-.61.22l-2 3.460c-.13.22-.07.49.12.64l2.110 1.650c-.04.32-.07.65-.07.98s.03.66.07.98l-2.110 1.650c-.19.15-.24.42-.12.64l2 3.460c.12.22.39.3.61.22l2.490-1c.52.4 1.080.73 1.690.98l.38 2.650c.03.24.24.42.49.42h4c.25 0 .46-.18.49-.42l.38-2.650c.61-.25 1.170-.59 1.690-.98l2.490 1c.23.09.49 0 .61-.22l2-3.460c.12-.22.07-.49-.12-.64l-2.110-1.650zM12 15.650a3.650 3.650 0 1 1 0-7.300a3.650 3.650 0 0 1 0 7.300z"/></svg>
      </button>
    `;
  }
}

class ActivityRow extends HTMLElement {
  connectedCallback() {
    const root = this.attachShadow({ mode: "open" });
    const map = maps[this.getAttribute("map")];
    const hasStats = this.querySelector("[slot=duration]");
    root.innerHTML = `
      <style>
        :host { display: block; border-bottom: 3px solid var(--line); }
        a {
          display: flex;
          align-items: center;
          gap: 48px;
          padding: 48px 0;
          color: inherit;
          text-decoration: none;
        }
        .thumb {
          flex: none;
          width: 255px;
          height: 255px;
          border-radius: 24px;
          overflow: hidden;
        }
        svg { display: block; }
        .info { flex: 1; align-self: start; padding-top: 14px; }
        .date, .stats {
          color: var(--muted);
          font-size: 42px;
          line-height: 48px;
          font-weight: 500;
        }
        .distance {
          margin: 19px 0 53px;
          font-family: Roboto, sans-serif;
          font-size: 54px;
          line-height: 60px;
          font-weight: 700;
        }
        .stats { display: flex; align-items: center; gap: 25px; }
        .stats i { width: 3px; height: 24px; background: #44494d; }
      </style>
      <a href="#${this.getAttribute("map")}">
        <div class="thumb">
          <svg width="255" height="255" viewBox="${map.box}">${map.art}</svg>
        </div>
        <div class="info">
          <div class="date"><slot name="date"></slot></div>
          <div class="distance"><slot name="distance"></slot></div>
          ${hasStats ? `<div class="stats"><slot name="duration"></slot><i></i><slot name="points"></slot></div>` : ""}
        </div>
        <svg width="24" height="42" viewBox="0 0 24 42" fill="none" stroke="var(--muted)" stroke-width="2.500"><path d="M2 3l19 19L2 41"/></svg>
      </a>
    `;
  }
}

const tabs = [
  ["운동", `<path d="M50 66L5 30Q1 24 5 18L20 3q4-4 8 0q6 14 18 15q4 0 5-2l1-10q2-5 5 0l5 33q20 1 22 20v2q0 5-5 5z"/><path d="M3 47h12a3 3 0 0 1 0 6H3a3 3 0 0 1 0-6zM3 60h31a3 3 0 0 1 0 6H3a3 3 0 0 1 0-6z"/>`, 84, 66],
  ["챌린지", `<path d="M5 0h31q5 0 6 4l1 5h20q5 0 5 5v35q0 5-5 5H40q-4 0-5-4l-1-5H9v28q0 4-4.500 4T0 73V5q0-5 5-5z"/>`, 68, 77],
  ["상점", `<path d="M15 18v2h5v-2q1-12 13-12t13 12v2h4v-2Q48 0 33 0T15 18z"/><path d="M6 18h53q6 0 6 6l-5 41q-1 10-11 10H16Q6 75 5 65L0 24q0-6 6-6z"/><circle cx="22" cy="34" r="5" fill="var(--bg)"/><circle cx="43" cy="34" r="5" fill="var(--bg)"/>`, 65, 75],
  ["지갑", `<rect width="77" height="62" rx="15"/><path d="M8 18q0-10 9-10h43q9 0 9 10q-3-2-7-2H15q-4 0-7 2zM9 27q3-4 7-4h46q4 0 5 4L55 38q-2 1-4 0L9 29z" fill="var(--bg)"/>`, 77, 62],
  ["내 정보", `<circle cx="30" cy="15" r="15"/><path d="M0 66a30 30 0 0 1 60 0z"/>`, 60, 66]
];

class TabBar extends HTMLElement {
  constructor() {
    super();
    const items = tabs.map(([name, art, w, h], i) => `
      <a href="#tab${i}" aria-label="${name}" ${i === 4 ? 'aria-current="page"' : ""}>
        <svg width="${w}" height="${h}" viewBox="0 0 ${w} ${h}" fill="currentColor">${art}</svg>
      </a>`).join("");
    this.attachShadow({ mode: "open" }).innerHTML = `
      <style>
        :host {
          display: block;
          border: 3px solid var(--edge);
          border-top-width: 6px;
          background: var(--bg);
        }
        nav {
          display: grid;
          grid-template-columns: repeat(5, 1fr);
          margin: 0 -3px;
          padding: 36px 0 129px;
        }
        a {
          display: flex;
          justify-content: center;
          align-items: center;
          height: 90px;
          color: var(--icon);
        }
        a[aria-current] { color: #fff; }
        svg { display: block; }
      </style>
      <nav>${items}</nav>
    `;
  }
}

customElements.define("app-screen", AppScreen);
customElements.define("status-bar", StatusBar);
customElements.define("title-bar", TitleBar);
customElements.define("activity-row", ActivityRow);
customElements.define("tab-bar", TabBar);
</script>
</body>
</html>
